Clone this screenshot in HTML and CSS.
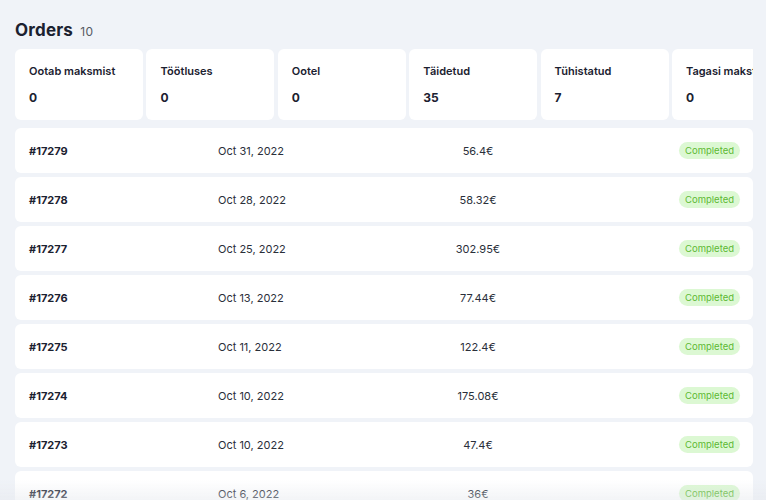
FILE: index.html
```html
<!DOCTYPE html>
<html lang="et">
<head>
  <meta charset="UTF-8" />
  <meta name="viewport" content="width=device-width, initial-scale=1.0"/>
  <title>Orders</title>
  <link rel="stylesheet" href="styles.css">
</head>
<body>
  <div class="page">
    <h1 class="title">Orders <span class="count">10</span></h1>

    <div class="stats">
      <div class="stat"><div class="stat-label">Ootab maksmist</div><div class="stat-value">0</div></div>
      <div class="stat"><div class="stat-label">Töötluses</div><div class="stat-value">0</div></div>
      <div class="stat"><div class="stat-label">Ootel</div><div class="stat-value">0</div></div>
      <div class="stat"><div class="stat-label">Täidetud</div><div class="stat-value">35</div></div>
      <div class="stat"><div class="stat-label">Tühistatud</div><div class="stat-value">7</div></div>
      <div class="stat"><div class="stat-label">Tagasi makstud</div><div class="stat-value">0</div></div>
    </div>

    <div class="orders">
      <div class="order"><span class="order-id">#17279</span><span class="order-date">Oct 31, 2022</span><span class="order-sum">56.4€</span><span class="badge">Completed</span></div>
      <div class="order"><span class="order-id">#17278</span><span class="order-date">Oct 28, 2022</span><span class="order-sum">58.32€</span><span class="badge">Completed</span></div>
      <div class="order"><span class="order-id">#17277</span><span class="order-date">Oct 25, 2022</span><span class="order-sum">302.95€</span><span class="badge">Completed</span></div>
      <div class="order"><span class="order-id">#17276</span><span class="order-date">Oct 13, 2022</span><span class="order-sum">77.44€</span><span class="badge">Completed</span></div>
      <div class="order"><span class="order-id">#17275</span><span class="order-date">Oct 11, 2022</span><span class="order-sum">122.4€</span><span class="badge">Completed</span></div>
      <div class="order"><span class="order-id">#17274</span><span class="order-date">Oct 10, 2022</span><span class="order-sum">175.08€</span><span class="badge">Completed</span></div>
      <div class="order"><span class="order-id">#17273</span><span class="order-date">Oct 10, 2022</span><span class="order-sum">47.4€</span><span class="badge">Completed</span></div>
      <div class="order"><span class="order-id">#17272</span><span class="order-date">Oct 6, 2022</span><span class="order-sum">36€</span><span class="badge">Completed</span></div>
    </div>
  </div>
  <div class="fade"></div>
</body>
</html>
```

FILE: styles.css
```css
body {
  margin: 0;
  background: #f0f3f8;
  font-family: 'Inter', 'Liberation Sans', sans-serif;
  color: #1b2130;
  overflow: hidden;
}

.page {
  width: 738px;
  padding: 20px 0 0 15px;
  overflow: hidden;
}

.title {
  margin: 0 0 7px;
  font-size: 17px;
  font-weight: 700;
  line-height: 20px;
  letter-spacing: 0.2px;
}

.count {
  margin-left: 3px;
  font-size: 12px;
  font-weight: 400;
  color: #555a63;
}

.stats {
  display: flex;
  gap: 3.4px;
  margin-bottom: 8px;
}

.stat {
  flex: 0 0 128px;
  height: 71px;
  box-sizing: border-box;
  padding: 15px 14px 0;
  background: #fff;
  border-radius: 6px;
  white-space: nowrap;
  overflow: hidden;
}

.stat-label {
  font-size: 11px;
  font-weight: 600;
  line-height: 14px;
}

.stat-value {
  margin-top: 13px;
  font-size: 12px;
  font-weight: 700;
  line-height: 14px;
}

.orders {
  display: flex;
  flex-direction: column;
  gap: 4px;
}

.order {
  display: grid;
  grid-template-columns: 189px 190px 140px 1fr;
  align-items: center;
  height: 45px;
  padding: 0 13px 0 14px;
  background: #fff;
  border-radius: 6px;
  font-size: 11px;
}

.order-id {
  font-weight: 700;
}

.order-date {
  color: #2a2f3a;
}

.order-sum {
  text-align: center;
  color: #2a2f3a;
}

.badge {
  justify-self: end;
  padding: 2px 6px;
  border-radius: 9px;
  background: #dcf8d3;
  color: #5cb834;
  font-size: 9.5px;
  line-height: 13px;
}

.fade {
  position: fixed;
  left: 0;
  right: 0;
  bottom: 0;
  height: 20px;
  background: linear-gradient(to bottom, rgba(235, 237, 241, 0), rgba(228, 231, 236, 0.45));
}
```
